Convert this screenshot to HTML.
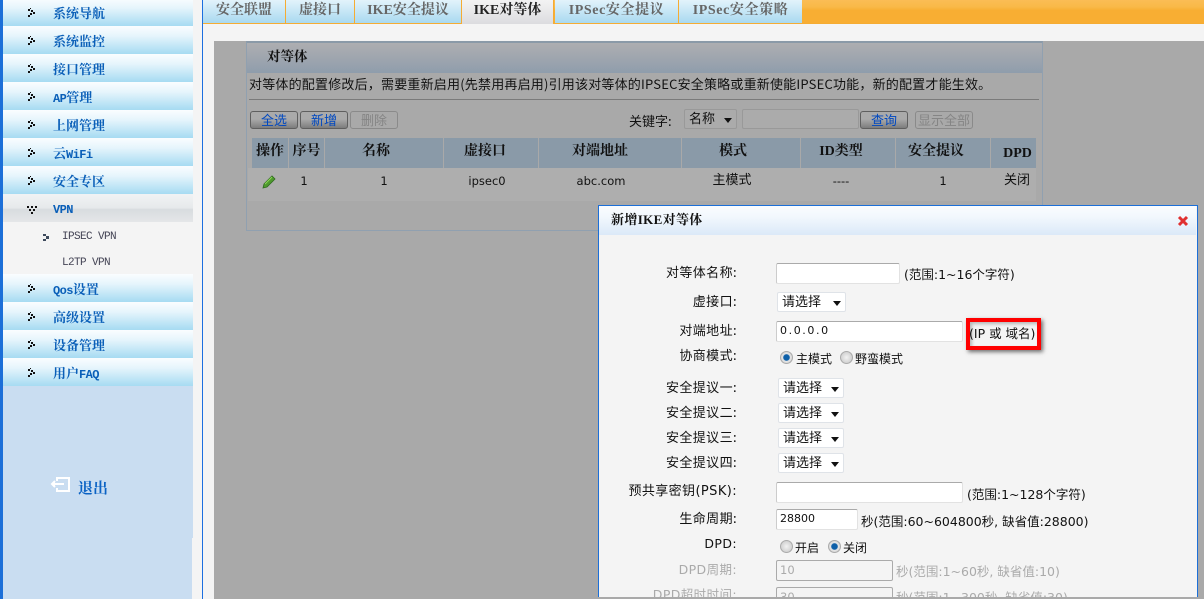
<!DOCTYPE html>
<html><head><meta charset="utf-8"><style>
html,body{margin:0;padding:0;width:1204px;height:599px;overflow:hidden;background:#f4f4f4}
div,span{position:absolute;box-sizing:border-box}
#r{left:0;top:0;width:1204px;height:599px;overflow:hidden;font:13px/16px "WenQuanYi Zen Hei","Noto Sans CJK SC",sans-serif;color:#111}
.t{white-space:nowrap;height:16px}
.m{left:3px;width:190px;height:28px;background:linear-gradient(#fafdff 0,#e6f5fc 35%,#a6dbf2 100%)}
.mt{left:53px;white-space:nowrap;font:bold 13px/16px "Liberation Serif","Noto Serif CJK SC",serif;color:#0a5fb8}
.mt i{font:bold 12px/16px "Liberation Mono",monospace;letter-spacing:-.6px}
.tab{top:0;height:23px;background:linear-gradient(#e2f3fb,#a9d9f0);border-right:1px solid #f5ac33;text-align:center;font:bold 14px/21px "Liberation Serif","Noto Serif CJK SC",serif;color:#666}
.th{top:138px;height:30px;background:#8a9aa8;text-align:center;font:bold 14px/28px "Liberation Serif","Noto Serif CJK SC",serif;color:#111}
.td{top:173px;height:16px;text-align:center;font-family:"DejaVu Sans","WenQuanYi Zen Hei",sans-serif;font-size:11.5px;color:#111}
.b{top:111px;width:48px;height:18px;border:1px solid #5f5f5f;border-radius:3px;background:linear-gradient(#aaa 0,#aaa 45%,#7d7d7d 100%);text-align:center;line-height:15px;color:#0048c0}
.d{border-color:#8a8a8a;background:#a9a9a9;color:#858585}
.i{background:#fff;border:1px solid #e2e2e2;border-top-color:#aaa;border-left-color:#ccc;border-radius:2px}
.l{right:467px;text-align:right;white-space:nowrap;height:16px;letter-spacing:.4px}
.s{background:#fff;border:1px solid #dfe3e8;border-radius:2px;height:20px;line-height:16px;padding-left:4px;white-space:nowrap}
.s:after{content:"";position:absolute;right:4px;top:8px;border:4px solid transparent;border-top:5px solid #111;border-bottom:0}
.g{color:#aaa}
.a{font-family:"DejaVu Sans","WenQuanYi Zen Hei",sans-serif;font-size:12.5px}
.rd{width:13px;height:13px;border-radius:50%;border:1px solid #aaa;background:radial-gradient(#f2f2f2,#c4c4c4)}
.rd.on{background:radial-gradient(#0d5fa8 0,#0d5fa8 36%,#e6e6e6 48%,#c4c4c4 100%)}
.z{font-size:12px}
svg{position:absolute}
</style></head><body><div id="r">
<div style="left:0;top:0;width:3px;height:599px;background:#1c6fd8"></div>
<div style="left:3px;top:386px;width:190px;height:152px;background:#c9ddf1"></div>
<div style="left:3px;top:538px;width:189px;height:61px;background:#c9ddf1"></div>
<div class="m" style="top:-2px"></div><div class="m" style="top:26px"></div><div class="m" style="top:54px"></div><div class="m" style="top:82px"></div><div class="m" style="top:110px"></div><div class="m" style="top:138px"></div><div class="m" style="top:166px"></div>
<div class="m" style="top:194px;background:linear-gradient(#f1f3f4,#e6e9eb 50%,#d8dcdf 55%,#e4e6e8 100%)"></div>
<div class="m" style="top:274px"></div><div class="m" style="top:302px"></div><div class="m" style="top:330px"></div><div class="m" style="top:358px"></div>
<svg width="60" height="400" style="left:0;top:0" fill="#111">
<defs><g id="c"><rect x="0" y="0" width="2" height="2"/><rect x="3" y="1" width="2" height="2"/><rect x="5" y="3" width="2" height="2"/><rect x="2" y="4" width="2" height="2"/><rect x="0" y="6" width="2" height="2"/><rect x="2" y="-1" width="1" height="1"/></g></defs>
<use href="#c" x="28" y="9"/><use href="#c" x="28" y="37"/><use href="#c" x="28" y="65"/><use href="#c" x="28" y="93"/><use href="#c" x="28" y="121"/><use href="#c" x="28" y="149"/><use href="#c" x="28" y="177"/><use href="#c" x="28" y="285"/><use href="#c" x="28" y="313"/><use href="#c" x="28" y="341"/><use href="#c" x="28" y="369"/>
<g><rect x="27" y="206" width="2" height="2"/><rect x="31" y="206" width="2" height="2"/><rect x="35" y="206" width="2" height="2"/><rect x="29" y="209" width="2" height="2"/><rect x="33" y="209" width="2" height="2"/><rect x="31" y="212" width="2" height="2"/></g>
<g fill="#3d4a5c"><rect x="43" y="234" width="3" height="2"/><rect x="43" y="239" width="3" height="2"/><rect x="46" y="236" width="3" height="3"/></g>
</svg>
<span class="mt" style="top:6px">系统导航</span><span class="mt" style="top:34px">系统监控</span><span class="mt" style="top:62px">接口管理</span><span class="mt" style="top:90px"><i>AP</i>管理</span><span class="mt" style="top:118px">上网管理</span><span class="mt" style="top:146px">云<i>WiFi</i></span><span class="mt" style="top:174px">安全专区</span><span class="mt" style="top:201px"><i>VPN</i></span>
<span class="t" style="left:62px;top:229px;font:11px/16px 'Liberation Mono',monospace;letter-spacing:-.6px;color:#445">IPSEC VPN</span>
<span class="t" style="left:62px;top:255px;font:11px/16px 'Liberation Mono',monospace;letter-spacing:-.6px;color:#445">L2TP VPN</span>
<span class="mt" style="top:282px"><i>Qos</i>设置</span><span class="mt" style="top:310px">高级设置</span><span class="mt" style="top:338px">设备管理</span><span class="mt" style="top:366px">用户<i>FAQ</i></span>
<svg width="22" height="18" style="left:50px;top:476px" fill="none" stroke="#fff" stroke-width="2"><path d="M7 5V2H19V15H7V12"/><path d="M2 8H14" /><path d="M5 5L2 8L5 11" fill="#fff"/></svg>
<span class="t" style="left:78px;top:481px;font:bold 15px/16px 'Liberation Serif','Noto Serif CJK SC',serif;color:#0a62c4">退出</span>

<div style="left:202px;top:0;width:1px;height:599px;background:#1c6fe0"></div>
<div style="left:203px;top:0;width:1001px;height:23px;background:linear-gradient(#fbbd55,#f9b948 30%,#f8ae33 45%,#f8ae33)"></div>
<div style="left:203px;top:23px;width:1001px;height:1px;background:#f5ac33"></div>
<div class="tab" style="left:203px;width:83px">安全联盟</div>
<div class="tab" style="left:286px;width:69px">虚接口</div>
<div class="tab" style="left:355px;width:107px">IKE安全提议</div>
<div class="tab" style="left:462px;width:92px;background:linear-gradient(#f3f3f3,#dcdcdf);color:#222;height:24px;border-right:1px solid #f5ac33">IKE对等体</div>
<div class="tab" style="left:555px;width:124px;letter-spacing:.6px">IPSec安全提议</div>
<div class="tab" style="left:679px;width:123px;border-right:0;letter-spacing:.6px">IPSec安全策略</div>

<div style="left:214px;top:41px;width:990px;height:558px;background:#a9a9a9"></div>
<div style="left:246px;top:41px;width:797px;height:190px;border:1px solid #90a0b0;border-top:2px solid #8b9aa8;background:#a9a9a9"></div>
<div style="left:247px;top:43px;width:795px;height:30px;background:linear-gradient(#aeaeb1,#8f9dac)"></div>
<span class="t" style="left:267px;top:49px;font:bold 13.5px/16px 'Liberation Serif','Noto Serif CJK SC',serif;color:#111">对等体</span>
<span class="t" style="left:249px;top:76px;color:#111;letter-spacing:.2px">对等体的配置修改后，需要重新启用(先禁用再启用)引用该对等体的IPSEC安全策略或重新使能IPSEC功能，新的配置才能生效。</span>
<div style="left:249px;top:99px;width:790px;height:1px;background:#7a7a7a"></div>
<div class="b" style="left:250px">全选</div><div class="b" style="left:300px">新增</div><div class="b d" style="left:350px">删除</div>
<span class="t" style="left:629px;top:113px">关键字:</span>
<div class="s" style="left:684px;top:109px;width:53px;background:#ababab;border-color:#999;color:#111">名称</div>
<div style="left:742px;top:109px;width:117px;height:20px;background:#ababab;border:1px solid #999;border-radius:2px"></div>
<div class="b" style="left:860px;width:48px">查询</div>
<div class="b d" style="left:915px;width:58px">显示全部</div>

<div class="th" style="left:252px;width:36px">操作</div>
<div class="th" style="left:289px;width:35px">序号</div>
<div class="th" style="left:325px;width:118px;padding-right:16px">名称</div>
<div class="th" style="left:444px;width:94px;padding-right:12px">虚接口</div>
<div class="th" style="left:539px;width:142px;padding-right:20px">对端地址</div>
<div class="th" style="left:682px;width:118px;padding-right:16px">模式</div>
<div class="th" style="left:801px;width:94px;padding-right:14px">ID类型</div>
<div class="th" style="left:896px;width:94px;padding-right:14px">安全提议</div>
<div class="th" style="left:991px;width:45px;line-height:31px;padding-left:8px">DPD</div>
<div style="left:248px;top:168px;width:788px;height:33px;background:#aeaeae"></div>
<svg width="16" height="16" style="left:261px;top:174px"><path d="M2 14L3 10L11 2L14 5L6 13Z" fill="#4f9a2e" stroke="#2f6a1e" stroke-width=".8"/><path d="M4 10L11 3" stroke="#8fd85a"/></svg>
<div class="td" style="left:289px;width:30px">1</div>
<div class="td" style="left:325px;width:118px">1</div>
<div class="td" style="left:440px;width:94px">ipsec0</div>
<div class="td" style="left:531px;width:140px">abc.com</div>
<div class="td" style="left:682px;width:100px;top:172px;font:13px/16px 'WenQuanYi Zen Hei',sans-serif">主模式</div>
<div class="td" style="left:781px;width:120px">----</div>
<div class="td" style="left:893px;width:100px">1</div>
<div class="td" style="left:992px;width:50px;top:172px;font:13px/16px 'WenQuanYi Zen Hei',sans-serif">关闭</div>

<div style="left:598px;top:205px;width:600px;height:392px;background:#f4f4f4;border:1px solid #1c6fd8;border-bottom:0"></div>
<div style="left:599px;top:206px;width:597px;height:29px;background:linear-gradient(#fbfdff,#f1f7fd 40%,#dbe9f8)"></div>
<span class="t" style="left:611px;top:212px;font:bold 13px/16px 'Liberation Serif','Noto Serif CJK SC',serif;color:#111;letter-spacing:.35px">新增IKE对等体</span>
<svg width="12" height="12" style="left:1177px;top:215px"><path d="M2 2L10 10M10 2L2 10" stroke="#e03030" stroke-width="3"/></svg>

<span class="l" style="top:264px">对等体名称:</span>
<span class="l" style="top:293px">虚接口:</span>
<span class="l" style="top:322px">对端地址:</span>
<span class="l" style="top:347px">协商模式:</span>
<span class="l" style="top:379px">安全提议一:</span>
<span class="l" style="top:404px">安全提议二:</span>
<span class="l" style="top:429px">安全提议三:</span>
<span class="l" style="top:454px">安全提议四:</span>
<span class="l a" style="top:484px;font-size:13px">预共享密钥(PSK):</span>
<span class="l" style="top:510px">生命周期:</span>
<span class="l a" style="top:536px">DPD:</span>
<span class="l a g" style="top:562px">DPD周期:</span>
<span class="l a g" style="top:587px">DPD超时时间:</span>

<div class="i" style="left:776px;top:263px;width:124px;height:21px"></div>
<span class="t a" style="left:904px;top:267px">(范围:1~16个字符)</span>
<div class="s" style="left:777px;top:292px;width:69px">请选择</div>
<div class="i" style="left:776px;top:321px;width:187px;height:21px;padding-left:3px;line-height:18px;letter-spacing:1.6px;font-family:'DejaVu Sans',sans-serif;font-size:11px">0.0.0.0</div>
<span class="t a" style="left:969px;top:326px">(IP 或 域名)</span>
<div style="left:966px;top:318px;width:75px;height:32px;border:4px solid #f00;box-shadow:2px 2px 4px rgba(0,0,0,.55),inset 2px 2px 3px rgba(0,0,0,.25)"></div>
<div class="rd on" style="left:780px;top:351px"></div><span class="t z" style="left:796px;top:351px">主模式</span>
<div class="rd" style="left:840px;top:351px"></div><span class="t z" style="left:855px;top:351px">野蛮模式</span>
<div class="s" style="left:778px;top:378px;width:66px">请选择</div>
<div class="s" style="left:778px;top:403px;width:66px">请选择</div>
<div class="s" style="left:778px;top:428px;width:66px">请选择</div>
<div class="s" style="left:778px;top:453px;width:66px">请选择</div>
<div class="i" style="left:776px;top:482px;width:187px;height:21px"></div>
<span class="t a" style="left:967px;top:487px">(范围:1~128个字符)</span>
<div class="i" style="left:776px;top:509px;width:82px;height:21px;padding-left:3px;line-height:17px;font-family:'DejaVu Sans',sans-serif;font-size:11px">28800</div>
<span class="t a" style="left:861px;top:514px">秒(范围:60~604800秒, 缺省值:28800)</span>
<div class="rd" style="left:780px;top:540px"></div><span class="t z" style="left:795px;top:540px">开启</span>
<div class="rd on" style="left:828px;top:540px"></div><span class="t z" style="left:843px;top:540px">关闭</span>
<div class="i g" style="left:776px;top:560px;width:117px;height:21px;padding-left:3px;line-height:18px;border:1px solid #aaa;background:#f4f4f4;font-family:'DejaVu Sans',sans-serif;font-size:11.5px">10</div>
<span class="t a g" style="left:896px;top:564px">秒(范围:1~60秒, 缺省值:10)</span>
<div class="i g" style="left:776px;top:587px;width:117px;height:21px;padding-left:3px;line-height:18px;border:1px solid #aaa;background:#f4f4f4;font-family:'DejaVu Sans',sans-serif;font-size:11.5px">30</div>
<span class="t a g" style="left:896px;top:590px">秒(范围:1~300秒, 缺省值:30)</span>
<div style="left:598px;top:597px;width:606px;height:2px;background:#a9a9a9"></div>
</div></body></html>
